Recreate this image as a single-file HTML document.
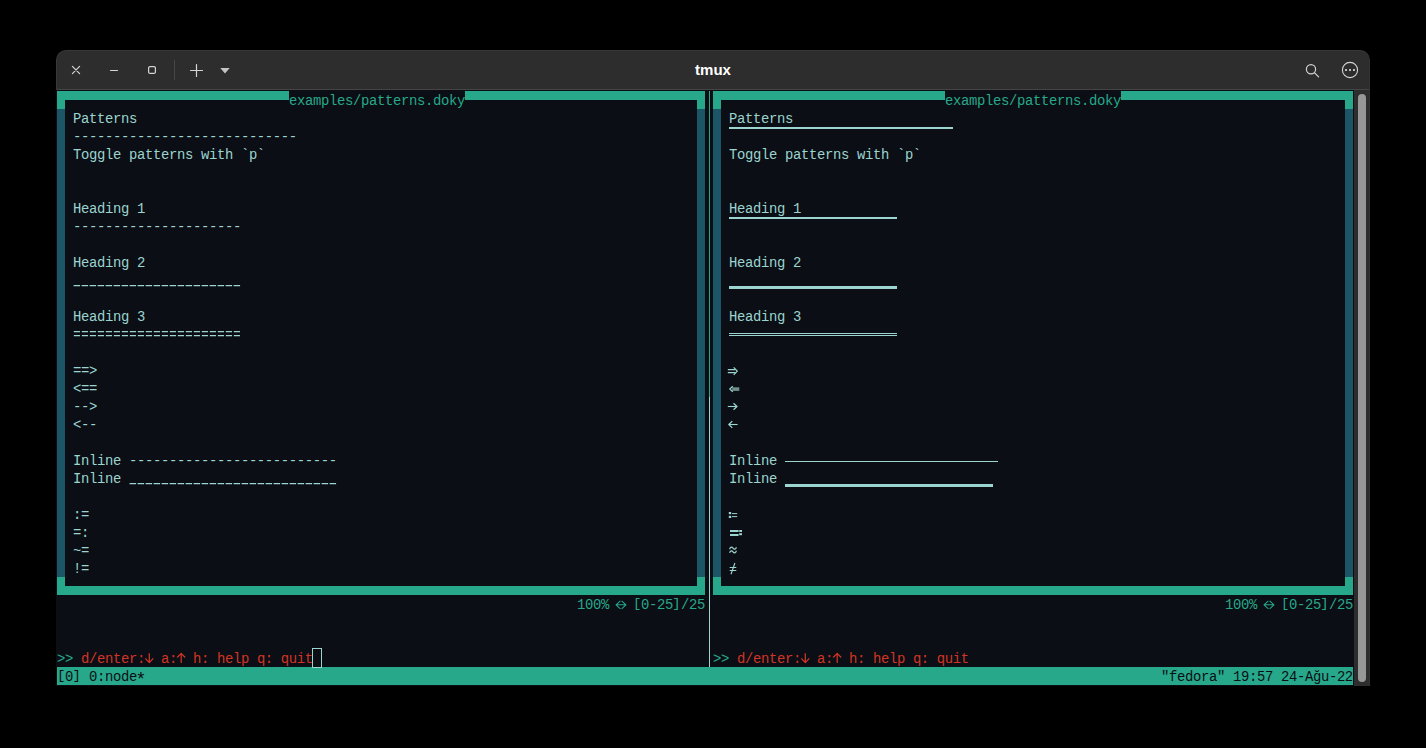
<!DOCTYPE html>
<html><head><meta charset="utf-8"><title>tmux</title>
<style>
html,body{margin:0;padding:0;background:#000;}
body{width:1426px;height:748px;position:relative;overflow:hidden;font-family:"Liberation Mono",monospace;}
.win{position:absolute;left:56px;top:50px;width:1314px;height:636px;background:#2d2d2d;border-radius:10px 10px 0 0;overflow:hidden;box-sizing:border-box;border:1px solid #383838;border-right-color:#333;border-bottom:none;}
.term{position:absolute;left:56px;top:90px;width:1298px;height:596px;background:#0b0e14;}
.r{position:absolute;}
.t{position:absolute;height:18px;line-height:18px;font-family:"Liberation Mono",monospace;font-size:13.9px;letter-spacing:-0.3414px;white-space:pre;}
.k{display:inline-block;transform:translateY(-1.7px) scaleY(0.968);}
.k2{display:inline-block;transform:translate(-0.6px,-1.7px) scaleY(0.968);}
.title{position:absolute;left:56px;top:50px;width:1314px;height:40px;line-height:40px;text-align:center;color:#fff;font-family:"Liberation Sans",sans-serif;font-weight:bold;font-size:15px;}
svg{position:absolute;overflow:visible;}
</style></head><body>
<div class="win"></div>
<div class="r" style="left:57px;top:89px;width:1312px;height:1px;background:#444"></div>
<div class="r" style="left:1358px;top:94px;width:8px;height:588px;background:#979797;border-radius:4px"></div>
<div class="title">tmux</div>
<div class="term"></div>
<div class="r" style="left:57px;top:91px;width:232px;height:9px;background:#27a88a;"></div>
<div class="r" style="left:465px;top:91px;width:240px;height:9px;background:#27a88a;"></div>
<div class="r" style="left:57px;top:91px;width:8px;height:18px;background:#27a88a;"></div>
<div class="r" style="left:697px;top:91px;width:8px;height:18px;background:#27a88a;"></div>
<div class="r" style="left:57px;top:109px;width:8px;height:468px;background:#1b5566;"></div>
<div class="r" style="left:697px;top:109px;width:8px;height:468px;background:#1b5566;"></div>
<div class="r" style="left:57px;top:577px;width:8px;height:18px;background:#27a88a;"></div>
<div class="r" style="left:697px;top:577px;width:8px;height:18px;background:#27a88a;"></div>
<div class="r" style="left:57px;top:586px;width:648px;height:9px;background:#27a88a;"></div>
<div class="t" style="left:289px;top:92px;color:#27a88a;">examples/patterns.doky</div>
<div class="t" style="left:577px;top:596px;color:#27a88a;">100%   <span class="k">[</span>0-25<span class="k2">]</span>/25</div>
<div class="r" style="left:713px;top:91px;width:232px;height:9px;background:#27a88a;"></div>
<div class="r" style="left:1121px;top:91px;width:232px;height:9px;background:#27a88a;"></div>
<div class="r" style="left:713px;top:91px;width:8px;height:18px;background:#27a88a;"></div>
<div class="r" style="left:1345px;top:91px;width:8px;height:18px;background:#27a88a;"></div>
<div class="r" style="left:713px;top:109px;width:8px;height:468px;background:#1b5566;"></div>
<div class="r" style="left:1345px;top:109px;width:8px;height:468px;background:#1b5566;"></div>
<div class="r" style="left:713px;top:577px;width:8px;height:18px;background:#27a88a;"></div>
<div class="r" style="left:1345px;top:577px;width:8px;height:18px;background:#27a88a;"></div>
<div class="r" style="left:713px;top:586px;width:640px;height:9px;background:#27a88a;"></div>
<div class="t" style="left:945px;top:92px;color:#27a88a;">examples/patterns.doky</div>
<div class="t" style="left:1225px;top:596px;color:#27a88a;">100%   <span class="k">[</span>0-25<span class="k2">]</span>/25</div>
<div class="r" style="left:709px;top:91px;width:1px;height:306px;background:#27a88a;"></div>
<div class="r" style="left:709px;top:397px;width:1px;height:270px;background:#9cd4d0;"></div>
<div class="t" style="left:73px;top:110px;color:#9cd4d0;">Patterns</div>
<div class="t" style="left:73px;top:128px;color:#9cd4d0;">----------------------------</div>
<div class="t" style="left:73px;top:146px;color:#9cd4d0;">Toggle patterns with `p`</div>
<div class="t" style="left:73px;top:200px;color:#9cd4d0;">Heading 1</div>
<div class="t" style="left:73px;top:218px;color:#9cd4d0;">---------------------</div>
<div class="t" style="left:73px;top:254px;color:#9cd4d0;">Heading 2</div>
<div class="t" style="left:73px;top:308px;color:#9cd4d0;">Heading 3</div>
<div class="t" style="left:73px;top:362px;color:#9cd4d0;">==&gt;</div>
<div class="t" style="left:73px;top:380px;color:#9cd4d0;">&lt;==</div>
<div class="t" style="left:73px;top:398px;color:#9cd4d0;">--&gt;</div>
<div class="t" style="left:73px;top:416px;color:#9cd4d0;">&lt;--</div>
<div class="t" style="left:73px;top:452px;color:#9cd4d0;">Inline --------------------------</div>
<div class="t" style="left:73px;top:470px;color:#9cd4d0;">Inline</div>
<div class="t" style="left:73px;top:506px;color:#9cd4d0;">:=</div>
<div class="t" style="left:73px;top:524px;color:#9cd4d0;">=:</div>
<div class="t" style="left:73px;top:542px;color:#9cd4d0;">~=</div>
<div class="t" style="left:73px;top:560px;color:#9cd4d0;">!=</div>
<div class="t" style="left:729px;top:110px;color:#9cd4d0;">Patterns</div>
<div class="t" style="left:729px;top:146px;color:#9cd4d0;">Toggle patterns with `p`</div>
<div class="t" style="left:729px;top:200px;color:#9cd4d0;">Heading 1</div>
<div class="t" style="left:729px;top:254px;color:#9cd4d0;">Heading 2</div>
<div class="t" style="left:729px;top:308px;color:#9cd4d0;">Heading 3</div>
<div class="t" style="left:729px;top:452px;color:#9cd4d0;">Inline</div>
<div class="t" style="left:729px;top:470px;color:#9cd4d0;">Inline</div>
<div class="r" style="left:729px;top:127px;width:224px;height:2px;background:#9cd4d0;"></div>
<div class="r" style="left:729px;top:217px;width:168px;height:2px;background:#9cd4d0;"></div>
<div class="r" style="left:729px;top:286px;width:168px;height:3px;background:#9cd4d0;"></div>
<div class="r" style="left:729px;top:333px;width:168px;height:1px;background:#9cd4d0;"></div>
<div class="r" style="left:729px;top:335px;width:168px;height:1px;background:#9cd4d0;"></div>
<div class="r" style="left:785px;top:461px;width:213px;height:1px;background:#9cd4d0;"></div>
<div class="r" style="left:785px;top:484px;width:208px;height:3px;background:#9cd4d0;"></div>
<div class="t" style="left:57px;top:650px;color:#27a88a;">&gt;&gt;</div>
<div class="t" style="left:81px;top:650px;color:#d23526;">d/enter:  a:  h: help q: quit</div>
<div class="t" style="left:713px;top:650px;color:#27a88a;">&gt;&gt;</div>
<div class="t" style="left:737px;top:650px;color:#d23526;">d/enter:  a:  h: help q: quit</div>
<div class="r" style="left:57px;top:667px;width:1296px;height:18px;background:#27a88a;"></div>
<div class="t" style="left:57px;top:668px;color:#0b0e14;"><span class="k">[</span>0<span class="k2">]</span> 0:node</div>
<div class="t" style="left:135.5px;top:671px;width:10px;text-align:center;color:#0b0e14;font-size:18px;letter-spacing:0">*</div>
<div class="t" style="left:1161px;top:668px;color:#0b0e14;">"fedora" 19:57 24-Ağu-22</div>
<svg style="left:0;top:0" width="1426" height="100" viewBox="0 0 1426 100" fill="none" stroke="#d4d4d4" stroke-width="1.2" stroke-linecap="round">
<path d="M72.4 66.4 L79.6 73.6 M79.6 66.4 L72.4 73.6"/>
<path d="M110.5 70.5 H117.5"/>
<rect x="148.6" y="66.6" width="6.8" height="6.8" rx="1.5"/>
<path d="M174.5 60 V80" stroke="#474747" stroke-width="1" stroke-linecap="butt"/>
<path d="M190.5 70.5 H202.5 M196.5 64.5 V76.5"/>
<path d="M220.3 68 H229.7 L225 73.6 Z" fill="#c4c4c4" stroke="none"/>
<circle cx="1311" cy="69.2" r="4.6"/>
<path d="M1314.4 72.6 L1318.6 76.8"/>
<circle cx="1350" cy="70" r="7.6" stroke-width="1.1"/>
<g fill="#bdbdbd" stroke="none"><rect x="1345" y="69" width="2" height="2"/><rect x="1349" y="69" width="2" height="2"/><rect x="1353" y="69" width="2" height="2"/></g>
</svg>
<div class="r" style="left:312px;top:648px;width:10px;height:20px;box-sizing:border-box;border:1px solid #9cd4d0"></div>
<svg style="left:0;top:0" width="1426" height="748" viewBox="0 0 1426 748" fill="none" stroke="#9cd4d0" stroke-width="1.1" stroke-linecap="butt" stroke-linejoin="round">
<!-- underscores / equals rows (left pane) -->
<g stroke-width="1.25" stroke-dasharray="6.5 1.5">
<path d="M73.6 285.6 H241"/>
<path d="M129.6 483.6 H337"/>
</g>
<g stroke-width="1.25" stroke-dasharray="6.2 1.8">
<path d="M73.8 331.6 H241 M73.8 335.6 H241"/>
</g>
<!-- => -->
<path d="M727.8 369.6 H735.6 M727.8 372.6 H735.6"/>
<path d="M733.7 367.3 L737.3 371.1 L733.7 374.9" stroke-width="1.2"/>
<!-- <= -->
<rect x="732.2" y="387.3" width="7.1" height="3.6" fill="#6f8f8e" stroke="none"/>
<path d="M732.8 386.2 L729.8 389 L732.8 391.8" stroke-width="1.2"/>
<!-- -> -->
<path d="M727.8 406.5 H736.8"/>
<path d="M733.5 403.2 L737 406.5 L733.5 409.8" stroke-width="1.2"/>
<!-- <- -->
<path d="M729 424.5 H737.6"/>
<path d="M732.3 421.1 L728.8 424.5 L732.3 427.9" stroke-width="1.2"/>
<!-- := -->
<g fill="#9cd4d0" stroke="none">
<rect x="728.8" y="512" width="2.4" height="2.2"/><rect x="728.8" y="515.8" width="2.4" height="2.2"/>
<rect x="732" y="513.1" width="5.2" height="1"/><rect x="732" y="516.1" width="5.2" height="1"/>
<!-- =: -->
<rect x="730" y="530" width="8.6" height="2"/><rect x="730" y="534" width="8.6" height="2"/>
<rect x="739.2" y="530" width="2.8" height="2"/><rect x="739.2" y="533.2" width="2.8" height="2"/>
</g>
<!-- approx -->
<path d="M729.6 549.2 C730.4 546.6 732 546.8 733 548.2 C734 549.6 735.6 549.8 736.4 547.2 M729.6 552.8 C730.4 550.2 732 550.4 733 551.8 C734 553.2 735.6 553.4 736.4 550.8" stroke-width="1.2"/>
<!-- neq -->
<path d="M729.7 567.5 H736.3 M729.7 570.5 H736.3 M734.9 563 L731 574.3"/>
<!-- down/up arrows in prompts -->
<g stroke="#d23526" stroke-width="1.25">
<path d="M149.3 653.2 V662.4 M145.3 658.4 L149.3 662.6 L153.3 658.4"/>
<path d="M181.2 663 V653.8 M177.2 657.5 L181.2 653.4 L185.2 657.5"/>
<path d="M805.3 653.2 V662.4 M801.3 658.4 L805.3 662.6 L809.3 658.4"/>
<path d="M837.2 663 V653.8 M833.2 657.5 L837.2 653.4 L841.2 657.5"/>
</g>
<!-- <-> in percent lines -->
<g stroke="#27a88a" stroke-width="1.05">
<path d="M616.2 604.8 H625.8 M620.4 600.8 L616 604.8 L620.4 608.8 M621.6 600.8 L626 604.8 L621.6 608.8"/>
<path d="M1264.2 604.8 H1273.8 M1268.4 600.8 L1264 604.8 L1268.4 608.8 M1269.6 600.8 L1274 604.8 L1269.6 608.8"/>
</g>
</svg>
</body></html>
